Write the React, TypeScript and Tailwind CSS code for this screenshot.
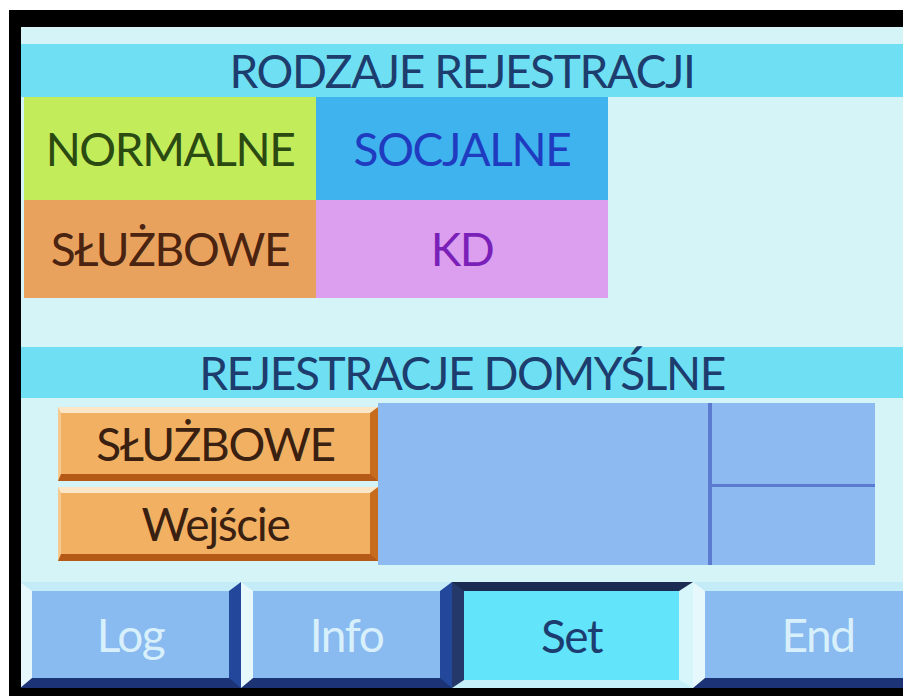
const FONT = "font-['Lato','Liberation_Sans',sans-serif] tracking-[-1.4px]";

function Cell({ label, className }: { label: string; className: string }) {
  return (
    <div className={`w-[292px] flex items-center justify-center text-[46px] leading-none ${className}`}>
      {label}
    </div>
  );
}

function OrangeButton({ label }: { label: string }) {
  return (
    <div className="w-[320px] h-[74px] flex items-center justify-center bg-[#f1b062] border-t-[6px] border-t-[#fbe6c8] border-l-[3px] border-l-[#f6c890] border-r-[8px] border-r-[#c66c1c] border-b-[7px] border-b-[#b45a16] text-[46px] leading-none text-[#3a2010]">
      {label}
    </div>
  );
}

function NavButton({ label, width, active }: { label: string; width: string; active?: boolean }) {
  if (active) {
    return (
      <div
        className={`${width} h-full flex items-center justify-center bg-[#62e4fa] border-t-[9px] border-t-[#1b2b52] border-l-[12px] border-l-[#24386a] border-r-[14px] border-r-[#d6f6fb] border-b-[8px] border-b-[#c4eff9] text-[46px] leading-none text-[#1c3d70]`}
      >
        {label}
      </div>
    );
  }
  return (
    <div
      className={`${width} h-full flex items-center justify-center bg-[#89baf0] border-t-[9px] border-t-[#c4ebf8] border-l-[12px] border-l-[#e6f8fb] border-r-[12px] border-r-[#23479a] border-b-[10px] border-b-[#1c3375] text-[46px] leading-none text-[#d8f0fb]`}
    >
      {label}
    </div>
  );
}

export default function App() {
  return (
    <div className={`w-[903px] h-[696px] overflow-hidden bg-white pt-[10px] pl-[9px] ${FONT}`}>
      <div className="h-[686px] w-[894px] bg-[#d5f4f7] border-t-[17px] border-l-[12px] border-b-[8px] border-black flex flex-col overflow-hidden">
        <div className="h-[17px] shrink-0" />

        <div className="h-[53px] shrink-0 w-[882px] bg-[#6fe0f3] flex items-center justify-center text-[46px] leading-none text-[#1c3d6e]">
          RODZAJE REJESTRACJI
        </div>

        <div className="flex h-[103px] shrink-0 pl-[3px]">
          <Cell label="NORMALNE" className="bg-[#c3ec5a] text-[#2a4a12]" />
          <Cell label="SOCJALNE" className="bg-[#3fb3ee] text-[#1f3bc0]" />
        </div>
        <div className="flex h-[98px] shrink-0 pl-[3px]">
          <Cell label="SŁUŻBOWE" className="bg-[#e9a25e] text-[#4a2410]" />
          <Cell label="KD" className="bg-[#dc9ff0] text-[#7a1fb8]" />
        </div>

        <div className="h-[49px] shrink-0" />

        <div className="h-[51px] shrink-0 w-[882px] bg-[#6fe0f3] flex items-center justify-center text-[46px] leading-none text-[#1c3d6e]">
          REJESTRACJE DOMYŚLNE
        </div>

        <div className="h-[5px] shrink-0" />

        <div className="flex h-[162px] shrink-0">
          <div className="w-[357px] pl-[37px] pt-[4px] flex flex-col gap-[6px]">
            <OrangeButton label="SŁUŻBOWE" />
            <OrangeButton label="Wejście" />
          </div>
          <div className="w-[497px] bg-[#8dbaf0] flex">
            <div className="w-[330px]" />
            <div className="w-[4px] bg-[#5a7bd0]" />
            <div className="flex-1 flex flex-col">
              <div className="h-[81px]" />
              <div className="h-[3px] bg-[#5a7bd0]" />
              <div className="flex-1" />
            </div>
          </div>
        </div>

        <div className="h-[17px] shrink-0" />

        <div className="flex h-[106px] shrink-0 -ml-[1px]">
          <NavButton label="Log" width="w-[221px] shrink-0" />
          <NavButton label="Info" width="w-[211px] shrink-0" />
          <NavButton label="Set" width="w-[241px] shrink-0" active />
          <NavButton label="End" width="w-[250px] shrink-0" />
        </div>
      </div>
    </div>
  );
}
